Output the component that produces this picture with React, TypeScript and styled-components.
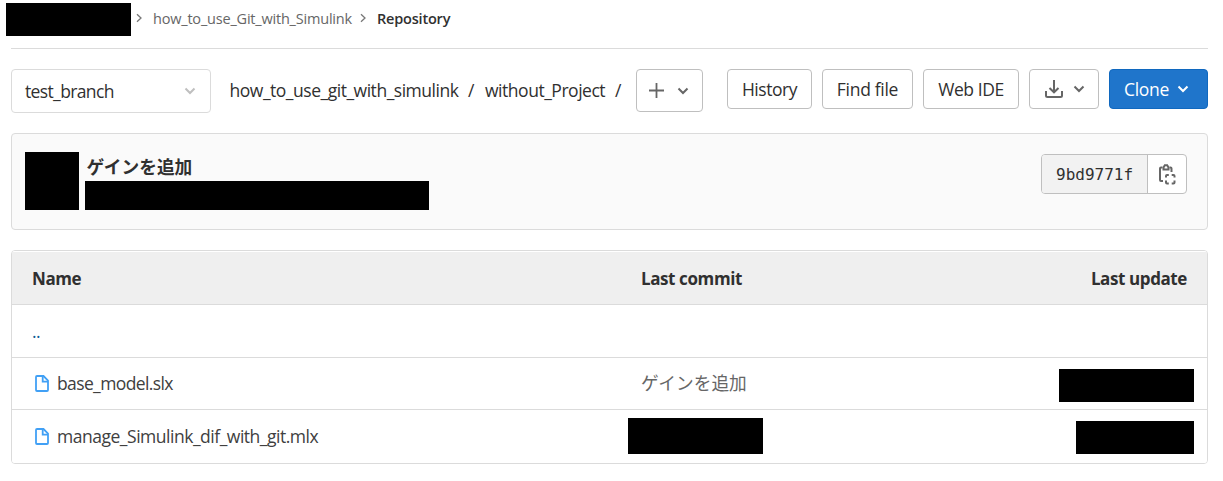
import React from "react";
import styled, { createGlobalStyle } from "styled-components";

const GlobalStyle = createGlobalStyle`
  * { box-sizing: border-box; }
  body {
    margin: 0;
    background: #fff;
    color: #303030;
    font-family: "Open Sans", "Noto Sans CJK JP", sans-serif;
    font-size: 17.5px;
  }
`;

const Page = styled.main`
  width: 1223px;
  height: 481px;
  padding: 0 15px 0 11px;
  overflow: hidden;
`;

const Redacted = styled.div<{ $w: number; $h: number }>`
  flex: none;
  width: ${(p) => p.$w}px;
  height: ${(p) => p.$h}px;
  background: #000;
`;

const Label = styled.span<{ $track?: number }>`
  white-space: pre;
  letter-spacing: ${(p) => p.$track ?? 0}px;
`;

const Breadcrumbs = styled.nav`
  display: flex;
  height: 49px;
  padding: 3px 0 0;
  margin-left: -5px;
  align-items: flex-start;
`;

const Crumbs = styled.div`
  display: flex;
  align-items: center;
  height: 30px;
  font-size: 14.5px;
`;

const Crumb = styled(Label)<{ $w: number; $current?: boolean }>`
  width: ${(p) => p.$w}px;
  color: ${(p) => (p.$current ? "#303030" : "#666")};
  font-weight: ${(p) => (p.$current ? 600 : 400)};
`;

const CrumbArrow = styled.svg`
  flex: none;
  width: 8px;
  height: 10px;
  margin: 0 10px 0 4px;
  fill: none;
  stroke: #777;
  stroke-width: 1.3;
`;

const Rule = styled.hr`
  height: 1px;
  margin: -1px 0 20px;
  border: 0;
  background: #dbdbdb;
`;

const Toolbar = styled.div`
  display: flex;
  align-items: flex-start;
  height: 64px;
`;

const BranchSelect = styled.div`
  display: flex;
  align-items: center;
  justify-content: space-between;
  width: 200px;
  height: 44px;
  padding: 0 14px 0 13px;
  border: 1px solid #dbdbdb;
  border-radius: 4px;
`;

const PathTrail = styled.div`
  display: flex;
  align-items: center;
  width: 425px;
  height: 42px;
  padding-left: 18.5px;
`;

const PathPart = styled(Label)<{ $w: number }>`
  width: ${(p) => p.$w}px;
`;

const Actions = styled.div`
  display: flex;
  gap: 10px;
  margin-left: auto;
`;

const Button = styled.button<{
  $w: number;
  $h?: number;
  $primary?: boolean;
  $gap?: number;
  $padLeft?: number;
  $padRight?: number;
}>`
  display: flex;
  flex: none;
  align-items: center;
  justify-content: center;
  gap: ${(p) => p.$gap ?? 0}px;
  width: ${(p) => p.$w}px;
  height: ${(p) => p.$h ?? 40}px;
  padding: 0 ${(p) => p.$padRight ?? 0}px 0 ${(p) => p.$padLeft ?? 0}px;
  border: 1px solid ${(p) => (p.$primary ? "#1068bf" : "#bfbfbf")};
  border-radius: 4px;
  background: ${(p) => (p.$primary ? "#1f75cb" : "#fff")};
  color: ${(p) => (p.$primary ? "#fff" : "#303030")};
  font: inherit;
`;

const Icon = styled.svg<{ $w: number; $h: number; $color?: string; $weight?: number }>`
  flex: none;
  width: ${(p) => p.$w}px;
  height: ${(p) => p.$h}px;
  fill: none;
  stroke: ${(p) => p.$color ?? "#666"};
  stroke-width: ${(p) => p.$weight ?? 2};
`;

const CommitCard = styled.section`
  display: flex;
  height: 97px;
  margin-bottom: 20px;
  padding: 18px 20px 0 13px;
  border: 1px solid #dbdbdb;
  border-radius: 4px;
  background: #fafafa;
`;

const CommitInfo = styled.div`
  flex: 1;
  padding-left: 6px;
`;

const CommitTitle = styled.h1`
  display: flex;
  align-items: center;
  height: 29px;
  margin: 0;
  padding: 0 0 1px 1.5px;
  font-size: 17.7px;
  font-weight: 700;
`;

const ShaGroup = styled.div`
  display: flex;
  width: 146px;
  height: 40px;
  margin-top: 2px;
  border: 1px solid #bfbfbf;
  border-radius: 4px;
  overflow: hidden;
  background: #fff;
`;

const Sha = styled.code`
  display: flex;
  align-items: center;
  width: 106px;
  padding-left: 14px;
  border-right: 1px solid #bfbfbf;
  background: #f2f2f2;
  font-family: "DejaVu Sans Mono", monospace;
  font-size: 16px;
`;

const CopyButton = styled.div`
  display: flex;
  flex: 1;
  align-items: center;
  justify-content: center;
`;

const FileTable = styled.section`
  height: 214px;
  border: 1px solid #dbdbdb;
  border-radius: 4px;
  overflow: hidden;
`;

const Row = styled.div<{ $h: number; $head?: boolean }>`
  display: grid;
  grid-template-columns: 609px 1fr 200px;
  height: ${(p) => p.$h}px;
  padding: 0 20px;
  border-top: 1px solid ${(p) => (p.$head ? "#fff" : "#dbdbdb")};
  background: ${(p) => (p.$head ? "#efefef" : "#fff")};
  font-weight: ${(p) => (p.$head ? 700 : 400)};
  font-size: ${(p) => (p.$head ? 17 : 17.5)}px;
`;

const Cell = styled.div<{ $end?: boolean; $muted?: boolean; $link?: boolean }>`
  display: flex;
  align-items: center;
  justify-content: ${(p) => (p.$end ? "flex-end" : "flex-start")};
  padding-bottom: ${(p) => (p.$muted ? 3 : 0)}px;
  font-size: ${(p) => (p.$muted ? "17.7px" : "inherit")};
  color: ${(p) => (p.$muted ? "#666" : p.$link ? "#0f5c96" : "inherit")};
`;

const FileName = styled.div`
  display: flex;
  align-items: center;
  gap: 8px;
  padding-left: 3px;
  color: #404040;

  ${Label} {
    padding-bottom: 2px;
  }
`;

const CommitMask = styled.div`
  margin: -1px 0 0 -13px;
`;

const DateMask = styled.div<{ $top: number }>`
  margin: ${(p) => p.$top}px -7px 0 0;
`;

const Chevron = ({ color }: { color?: string }) => (
  <Icon $w={12} $h={8} $color={color} viewBox="0 0 12 8">
    <path d="M1.5 1.5 6 6l4.5-4.5" />
  </Icon>
);

const FileIcon = () => (
  <Icon $w={14} $h={17} $color="#41a0f5" $weight={1.8} viewBox="0 0 14 17">
    <path d="M1 2q0-1 1-1h6.5L13 5.5V15q0 1-1 1H2q-1 0-1-1z" />
    <path d="M7.7 1v5.6H13" />
  </Icon>
);

export default function App() {
  return (
    <Page>
      <GlobalStyle />
      <Breadcrumbs>
        <Redacted $w={125} $h={33} />
        <Crumbs>
          <CrumbArrow viewBox="0 0 8 10"><path d="M2 1.2 6 5 2 8.8" /></CrumbArrow>
          <Crumb $w={202} $track={-0.2}>how_to_use_Git_with_Simulink</Crumb>
          <CrumbArrow viewBox="0 0 8 10"><path d="M2 1.2 6 5 2 8.8" /></CrumbArrow>
          <Crumb $w={80} $track={-0.2} $current>Repository</Crumb>
        </Crumbs>
      </Breadcrumbs>
      <Rule />
      <Toolbar>
        <BranchSelect>
          <Label $track={-0.63}>test_branch</Label>
          <Chevron color="#bfbfbf" />
        </BranchSelect>
        <PathTrail>
          <PathPart $w={238.5} $track={-0.48}>how_to_use_git_with_simulink</PathPart>
          <PathPart $w={17}>/</PathPart>
          <PathPart $w={130} $track={-0.47}>without_Project</PathPart>
          <PathPart $w={10}>/</PathPart>
        </PathTrail>
        <Button $w={67} $h={43} $gap={13} $padRight={2}>
          <Icon $w={15} $h={15} $weight={1.8} viewBox="0 0 15 15">
            <path d="M7.5 0v15M0 7.5h15" />
          </Icon>
          <Chevron />
        </Button>
        <Actions>
          <Button $w={85}><Label $track={-0.45}>History</Label></Button>
          <Button $w={91}><Label $track={-0.3}>Find file</Label></Button>
          <Button $w={96}><Label $track={-0.4}>Web IDE</Label></Button>
          <Button $w={70} $gap={10} $padLeft={2}>
            <Icon $w={18} $h={18} viewBox="0 0 18 18">
              <path d="M9 0v12M4.5 8 9 12.3 13.5 8M1 11v4.5Q1 17 2.5 17h13q1.5 0 1.5-1.5V11" />
            </Icon>
            <Chevron />
          </Button>
          <Button $w={99} $gap={8} $padRight={4} $primary>
            <Label $track={-0.3}>Clone</Label>
            <Chevron color="#fff" />
          </Button>
        </Actions>
      </Toolbar>
      <CommitCard>
        <Redacted $w={54} $h={58} />
        <CommitInfo>
          <CommitTitle>ゲインを追加</CommitTitle>
          <Redacted $w={344} $h={29} />
        </CommitInfo>
        <ShaGroup>
          <Sha>9bd9771f</Sha>
          <CopyButton>
            <Icon $w={17} $h={21} viewBox="0 0 17 21">
              <path d="M3.5 3.5H2q-1 0-1 1V16q0 1 1 1h2M10.5 3.5h1q1 0 1 1V8" />
              <path d="M4.5 5.5v-2l1.3-2.3h2.4l1.3 2.3v2z" />
              <path d="M7 13.5V12q0-1 1-1h1.8M12.7 11h1.8q1 0 1 1v1.5M15.5 16.5v2q0 1-1 1h-1.8M9.8 19.5H8q-1 0-1-1v-2" />
            </Icon>
          </CopyButton>
        </ShaGroup>
      </CommitCard>
      <FileTable>
        <Row $h={53} $head>
          <Cell><Label $track={-0.4}>Name</Label></Cell>
          <Cell><Label $track={-0.4}>Last commit</Label></Cell>
          <Cell $end><Label $track={-0.4}>Last update</Label></Cell>
        </Row>
        <Row $h={53}>
          <Cell $link><Label $track={-0.7}>..</Label></Cell>
        </Row>
        <Row $h={52}>
          <FileName><FileIcon /><Label $track={-0.62}>base_model.slx</Label></FileName>
          <Cell $muted>ゲインを追加</Cell>
          <Cell $end><DateMask $top={3}><Redacted $w={135} $h={33} /></DateMask></Cell>
        </Row>
        <Row $h={54}>
          <FileName><FileIcon /><Label $track={-0.48}>manage_Simulink_dif_with_git.mlx</Label></FileName>
          <Cell><CommitMask><Redacted $w={135} $h={36} /></CommitMask></Cell>
          <Cell $end><DateMask $top={2}><Redacted $w={118} $h={33} /></DateMask></Cell>
        </Row>
      </FileTable>
    </Page>
  );
}
